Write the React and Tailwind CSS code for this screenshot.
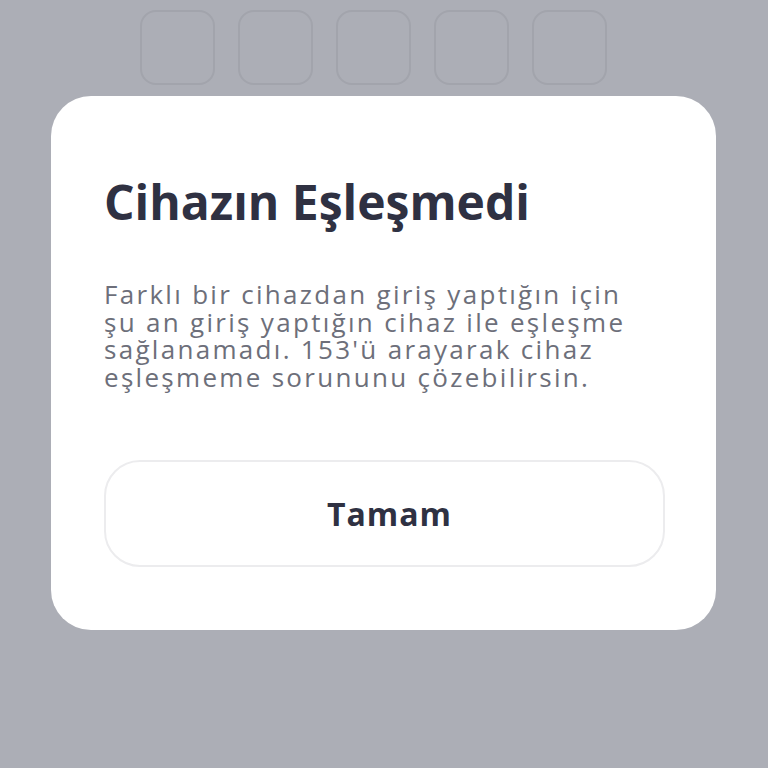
import React from "react";

const slots = [0, 1, 2, 3, 4];

const lines = [
  "Farklı bir cihazdan giriş yaptığın için",
  "şu an giriş yaptığın cihaz ile eşleşme",
  "sağlanamadı. 153'ü arayarak cihaz",
  "eşleşmeme sorununu çözebilirsin.",
];

function App() {
  return (
    <div
      className="h-[768px] w-[768px] overflow-hidden bg-[#acaeb6] flex flex-col"
      style={{ fontFamily: "'Open Sans', 'Noto Sans', sans-serif" }}
    >
      {/* code input placeholders behind the dialog */}
      <div className="mt-[10px] ml-[140px] flex gap-[23px]">
        {slots.map((i) => (
          <div
            key={i}
            className="h-[75px] w-[75px] rounded-[16px] border-2 border-[#a2a4ac]"
          />
        ))}
      </div>

      {/* dialog */}
      <div className="mt-[11px] ml-[51px] w-[665px] h-[534px] rounded-[40px] bg-white px-[53px] pt-[76px]">
        <h1 className="text-[48px] font-bold leading-[60px] text-[#2f3142]">
          Cihazın Eşleşmedi
        </h1>
        <p className="mt-[49px] text-[26px] leading-[27.5px] text-[#6d6f7a] tracking-[2.3px] whitespace-nowrap">
          {lines.map((line) => (
            <span key={line} className="block">
              {line}
            </span>
          ))}
        </p>
        <button className="mt-[69px] flex h-[107px] w-[561px] items-center justify-center rounded-[36px] border-2 border-[#ececee] bg-white pl-[10px]">
          <span className="text-[32px] font-bold text-[#2f3142] tracking-[1px]">
            Tamam
          </span>
        </button>
      </div>
    </div>
  );
}

export default App;
